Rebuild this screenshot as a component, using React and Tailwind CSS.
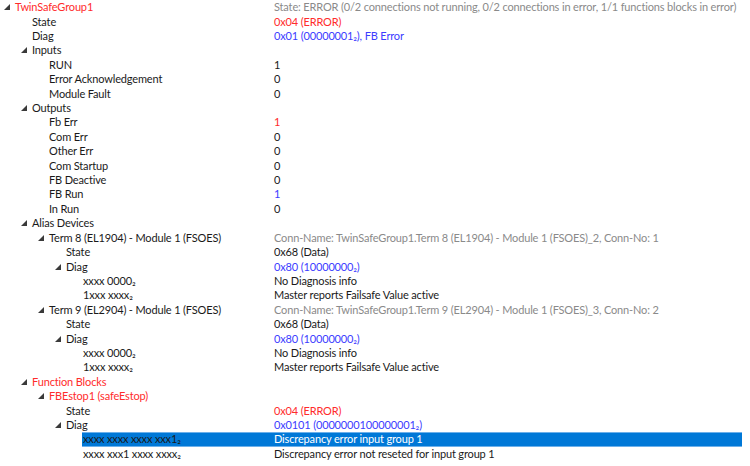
import React from 'react';

const RED = 'text-[#ff2b2b]';
const BLUE = 'text-[#3c3cff]';
const GRAY = 'text-[#8a8a8a]';

// lvl = tree depth, open = shows the expanded arrow
const rows = [
    { lvl: 0, open: true, label: 'TwinSafeGroup1', lc: RED, value: 'State: ERROR (0/2 connections not running, 0/2 connections in error, 1/1 functions blocks in error)', vc: GRAY },
    { lvl: 1, label: 'State', value: '0x04 (ERROR)', vc: RED },
    { lvl: 1, label: 'Diag', value: '0x01 (00000001₂), FB Error', vc: BLUE },
    { lvl: 1, open: true, label: 'Inputs' },
    { lvl: 2, label: 'RUN', value: '1' },
    { lvl: 2, label: 'Error Acknowledgement', value: '0' },
    { lvl: 2, label: 'Module Fault', value: '0' },
    { lvl: 1, open: true, label: 'Outputs' },
    { lvl: 2, label: 'Fb Err', value: '1', vc: RED },
    { lvl: 2, label: 'Com Err', value: '0' },
    { lvl: 2, label: 'Other Err', value: '0' },
    { lvl: 2, label: 'Com Startup', value: '0' },
    { lvl: 2, label: 'FB Deactive', value: '0' },
    { lvl: 2, label: 'FB Run', value: '1', vc: BLUE },
    { lvl: 2, label: 'In Run', value: '0' },
    { lvl: 1, open: true, label: 'Alias Devices' },
    { lvl: 2, open: true, label: 'Term 8 (EL1904) - Module 1 (FSOES)', value: 'Conn-Name: TwinSafeGroup1.Term 8 (EL1904) - Module 1 (FSOES)_2, Conn-No: 1', vc: GRAY },
    { lvl: 3, label: 'State', value: '0x68 (Data)' },
    { lvl: 3, open: true, label: 'Diag', value: '0x80 (10000000₂)', vc: BLUE },
    { lvl: 4, label: 'xxxx 0000₂', value: 'No Diagnosis info' },
    { lvl: 4, label: '1xxx xxxx₂', value: 'Master reports Failsafe Value active' },
    { lvl: 2, open: true, label: 'Term 9 (EL2904) - Module 1 (FSOES)', value: 'Conn-Name: TwinSafeGroup1.Term 9 (EL2904) - Module 1 (FSOES)_3, Conn-No: 2', vc: GRAY },
    { lvl: 3, label: 'State', value: '0x68 (Data)' },
    { lvl: 3, open: true, label: 'Diag', value: '0x80 (10000000₂)', vc: BLUE },
    { lvl: 4, label: 'xxxx 0000₂', value: 'No Diagnosis info' },
    { lvl: 4, label: '1xxx xxxx₂', value: 'Master reports Failsafe Value active' },
    { lvl: 1, open: true, label: 'Function Blocks', lc: RED },
    { lvl: 2, open: true, label: 'FBEstop1 (safeEstop)', lc: RED },
    { lvl: 3, label: 'State', value: '0x04 (ERROR)', vc: RED },
    { lvl: 3, open: true, label: 'Diag', value: '0x0101 (0000000100000001₂)', vc: BLUE },
    { lvl: 4, label: 'xxxx xxxx xxxx xxx1₂', value: 'Discrepancy error input group 1', selected: true },
    { lvl: 4, label: 'xxxx xxx1 xxxx xxxx₂', value: 'Discrepancy error not reseted for input group 1' },
];

const indent = ['w-0', 'w-[17px]', 'w-[34px]', 'w-[51px]', 'w-[68px]'];
const labelW = ['w-[259px]', 'w-[242px]', 'w-[225px]', 'w-[208px]', 'w-[191px]'];

const Arrow = () => (
    <svg width="6" height="6" viewBox="0 0 6 6" className="block">
        <polygon points="6,0 6,6 0,6" fill="#3a3a3a" />
    </svg>
);

const Row = ({ row }) => (
    <div className="flex h-[14.42px] items-center whitespace-nowrap">
        <div className={`shrink-0 ${indent[row.lvl]}`} />
        <div className="w-[15px] shrink-0 pl-[4px] flex items-center">
            {row.open && <Arrow />}
        </div>
        <div
            className={`flex flex-1 items-center h-full ${
                row.selected ? 'mr-[8px] -ml-[1px] pl-[1px] bg-[#0078d7] border-y border-[#6db0ea]' : ''
            }`}
        >
            <span className={`shrink-0 ${labelW[row.lvl]} ${row.lc || 'text-[#1a1a1a]'}`}>{row.label}</span>
            <span className={row.selected ? 'text-white' : row.vc || 'text-[#1a1a1a]'}>{row.value}</span>
        </div>
    </div>
);

export default function App() {
    return (
        <div className="w-[750px] h-[466px] overflow-hidden bg-white font-['Lato',sans-serif] text-[11px] tracking-[-0.15px] leading-[14px]">
            {rows.map((row, i) => (
                <Row key={i} row={row} />
            ))}
        </div>
    );
}
